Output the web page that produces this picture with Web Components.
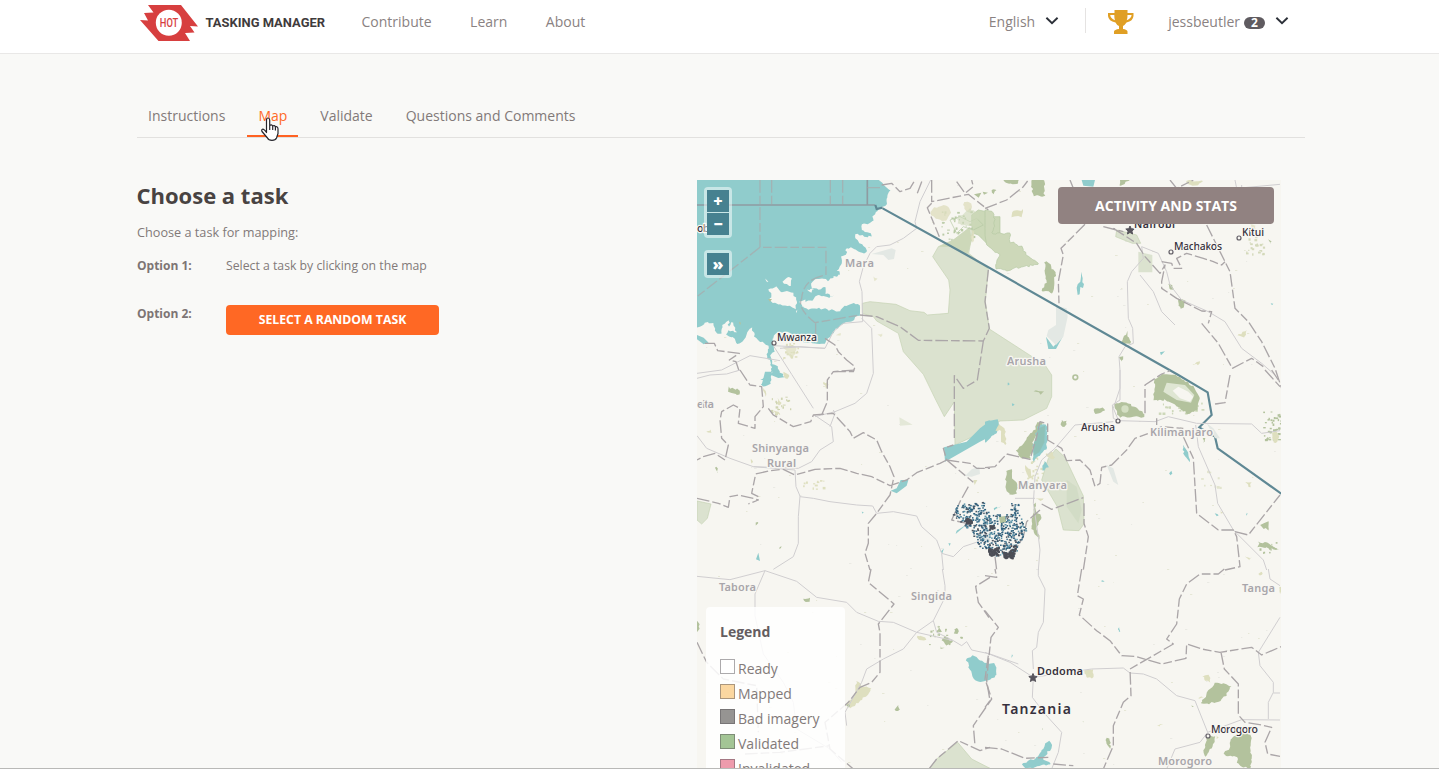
<!DOCTYPE html>
<html lang="en">
<head>
<meta charset="utf-8">
<title>Tasking Manager</title>
<style>
html,body{margin:0;height:100%;overflow:hidden;background:#f9f9f7;font-family:"Open Sans","Noto Sans",sans-serif;color:#827a79}
</style>
</head>
<body>
<tm-app></tm-app>
<script>
const define = (name, html, after) => customElements.define(name, class extends HTMLElement {
  constructor() {
    super();
    const t = document.createElement('template');
    t.innerHTML = html;
    this.attachShadow({ mode: 'open' }).appendChild(t.content.cloneNode(true));
  }
  connectedCallback() { if (after) after(this, this.shadowRoot); }
});

define('tm-chevron', `<style>:host{display:block;width:14px;height:9px}svg{display:block}</style>
<svg width="14" height="9" viewBox="0 0 14 9"><path d="M1.400 1.800 7 7.200l5.600-5.400" fill="none" stroke="#2c3038" stroke-width="1.900"/></svg>`);

define('tm-logo', `<style>:host{display:flex;align-items:center;gap:7.500px;width:221.500px;color:#3f3b3c}
b{font:700 12.950px/18px Roboto,sans-serif;white-space:nowrap;margin-top:1px}
svg{display:block;margin-top:2px}text{font:500 12px Roboto,sans-serif;fill:#d73f3f}</style>
<svg width="58" height="36" viewBox="0 0 58 36"><path d="M8 0H41L58 21.500 50 21 54.500 27.500 45 28 50 36H18.500L0 15 8 15.500 4 8 13.500 7.500Z" fill="#d73f3f"/><circle cx="28.800" cy="17.800" r="13" fill="#fff"/><text x="19.800" y="22.200" textLength="18.500" lengthAdjust="spacingAndGlyphs">HOT</text></svg>
<b>TASKING MANAGER</b>`);

define('tm-header', `<style>
:host{display:block;height:53px;border-bottom:1px solid #e9e8e7;background:#fff;font-size:14px}
.in{display:flex;align-items:center;height:44px;padding-left:140px;padding-right:150px;line-height:20px;white-space:nowrap}
nav{display:flex;gap:38.500px;color:#8a8282}
.right{display:flex;align-items:center;margin-left:auto;color:#8a8282}
.sep{width:1px;height:25px;background:#e5e3e2;margin:-3px 21px 0 26px}
.badge{font:700 12px/12px "Open Sans",sans-serif;color:#fff;background:#5f5b60;border-radius:7px;width:21px;height:12px;text-align:center;margin:2px 10px 0 4px}
tm-chevron{margin-top:-3px}
.trophy{display:block;margin-right:33px}
</style>
<div class="in"><tm-logo></tm-logo><nav><span>Contribute</span><span>Learn</span><span>About</span></nav>
<div class="right"><span style="margin-right:10px">English</span><tm-chevron></tm-chevron><i class="sep"></i>
<svg class="trophy" width="28" height="24" viewBox="0 0 28 24"><path d="M7.500 0H20.500V3H26.500V6Q26 11 19.500 12.500 17.500 15.500 16 16V19Q20 19.500 20.500 21.500V24H7V21.500Q7.500 19.500 12 19V16Q10 15.500 8.500 12.500 1.500 11 1 6V3H7.500Z" fill="#e09f24"/><path d="M3.200 5H7.300Q7.200 8 8 10.200 3.500 8.600 3.200 5ZM24.600 5H20.500Q20.600 8 19.700 10.200 24.200 8.600 24.600 5Z" fill="#fff"/></svg>
<span>jessbeutler</span><span class="badge">2</span><tm-chevron></tm-chevron></div></div>`);

define('tm-tab', `<style>:host{display:block;padding:0 11px;height:32px;line-height:22px;color:#827a79}
:host([active]){color:#ff6a28;border-bottom:2px solid #ff6222;height:30px}</style><slot></slot>`);

define('tm-tabs', `<style>:host{display:flex;gap:11px;margin:51px 134px 0 137px;height:32px;border-bottom:1px solid #e2e1df;font-size:14px;white-space:nowrap}</style><slot></slot>`);

define('tm-button', `<style>:host{display:block;background:#ff6824;color:#fff;border-radius:4px;text-align:center;font-weight:700}</style><slot></slot>`);

define('tm-option', `<style>:host{display:grid;grid-template-columns:89px 1fr;font-size:12.250px;line-height:18px}b{color:#7d7574;font-size:12px}</style><b><slot name="label"></slot></b><div><slot></slot></div>`);

define('tm-picker', `<style>
:host{display:block;width:560px}
h1{font-size:22px;line-height:30px;margin:0 0 0 -.5px;color:#484342;font-weight:700}
p{font-size:12.700px;line-height:18px;margin:13px 0 0}
tm-option{margin-top:16px;height:32px}
tm-button{width:213px;height:30px;line-height:29px;font-size:12.250px}
</style>
<h1>Choose a task</h1><p>Choose a task for mapping:</p>
<tm-option><span slot="label">Option 1:</span>Select a task by clicking on the map</tm-option>
<tm-option><span slot="label">Option 2:</span><tm-button>SELECT A RANDOM TASK</tm-button></tm-option>`);

define('tm-legend-item', `<style>:host{display:flex;gap:3px;height:25px;line-height:25px;font-size:14px}
i{box-sizing:border-box;width:15px;height:15px;margin-top:3px;border:1px solid rgba(90,85,90,.5);background:var(--swatch)}</style><i></i><slot></slot>`);

define('tm-legend', `<style>:host{display:block;box-sizing:border-box;width:139px;height:200px;background:rgba(255,255,255,.85);border-radius:4px;padding:14px 14px}
h2{font-size:14px;line-height:22px;margin:0 0 13px;color:#645d60}</style>
<h2>Legend</h2>
<tm-legend-item style="--swatch:#fff">Ready</tm-legend-item>
<tm-legend-item style="--swatch:#fbd7a0">Mapped</tm-legend-item>
<tm-legend-item style="--swatch:#969492">Bad imagery</tm-legend-item>
<tm-legend-item style="--swatch:#a3c595">Validated</tm-legend-item>
<tm-legend-item style="--swatch:#ee9bac">Invalidated</tm-legend-item>`);

define('tm-map-button', `<style>:host{display:block;width:22px;background:#468190;color:#fff;font:800 16px/22px "Open Sans",sans-serif;text-align:center;height:22px}</style><slot></slot>`);

define('tm-map', `<style>
:host{display:block;position:relative;width:584px;height:589px;overflow:hidden;background:#f7f6f1}
svg{display:block}
.ctl{position:absolute;left:7px;background:rgba(255,255,255,.5);border-radius:4px;padding:3px;display:flex;flex-direction:column;gap:1px}
tm-button{position:absolute;left:361px;top:7px;width:216px;height:37px;line-height:38px;font-size:14px;background:#918281}
tm-legend{position:absolute;left:9px;top:427px}
.w{fill:#90cccc}.l{fill:#f7f6f1}.p{fill:#dbe2cf;stroke:#c4d2b2;stroke-width:2}.g{fill:#b3c29d}.g2{fill:#cdd8b9}.y{fill:#dedfbf}.s{fill:#e3e8e4}
.r{fill:none;stroke:#d0ced0;stroke-width:3}.b{fill:none;stroke:#aba6a8;stroke-width:4;stroke-dasharray:38 9 26 9;stroke-linejoin:round}
.n{fill:none;stroke:#5f8894;stroke-width:6.500}
text{font-family:"Noto Sans","Open Sans",sans-serif;paint-order:stroke;stroke:#f7f6f1;stroke-width:2.500px;stroke-linejoin:round}
.reg{font-weight:600;font-size:11px;fill:#a8a5aa}.city{font-weight:500;font-size:10.500px;fill:#36313d}
</style>
<svg width="584" height="589" viewBox="697 180 584 589">
<g id="noise"></g>
<!-- north-west: Lake Victoria and Serengeti -->
<g transform="translate(690 175) scale(.33333)">
<path class="w rough" d="M21 15H570L578 28 600 45 590 65 590 90 570 100 548 125 548 140 518 150 515 165 540 175 547 185 515 182 490 175 500 195 520 210 533 230 520 235 490 220 465 218 470 235 452 245 455 270 440 285 455 300 430 305 415 320 400 310 380 310 365 325 365 340 385 345 405 335 405 355 430 365 410 368 385 360 370 375 345 378 335 390 355 405 385 400 420 405 445 412 460 395 490 382 508 392 508 420 490 435 460 445 435 465 420 485 405 505 385 510 360 500 345 505 330 495 300 475 270 470 250 480 248 500 252 530 240 540 245 565 265 575 270 595 245 590 240 625 228 635 215 630 230 605 245 585 240 560 230 545 235 510 215 500 195 490 185 455 175 470 155 500 145 512 135 490 110 480 115 465 140 470 125 440 115 455 120 430 100 445 95 480 80 475 70 445 50 440 35 455 21 460Z"/>
<path class="w" d="M21 480l20 8 15 15-15 5-20-15ZM238 600l20-18 25 25-18 2-20-8-24 14-10 0Z"/>
<path class="l rough" d="M280 320L290 308 305 310 303 330 285 330ZM235 345L260 335 270 350 300 350 312 360 322 375 318 400 295 392 270 390 235 375 248 360ZM318 405L328 402 320 412ZM330 382L345 375 355 388 340 395ZM350 345L375 340 360 352ZM225 310l12 10-8 1Z"/>
<path class="g" d="M234 372l12 0-6 8ZM147 440l6 3-3 8Z"/>
<path class="s" d="M545 237L605 220 617 225 612 252 595 255 580 240Z"/>
<path class="p" d="M517 385L540 380 618 388 660 407 702 412 712 420 775 415 780 345 776 315 745 270 728 245 745 215 790 195 838 158 848 168 836 235 895 282 886 380 898 462 1065 570 1085 600 1085 665 1070 700 1000 735 930 738 880 770 795 810 793 680 763 725 735 670 700 598 640 530 625 475 560 438 550 425 517 415Z"/>
<path class="g2" d="M745 215L790 195 838 158 846 195 832 238 790 215Z"/>
<g fill="none" stroke="#b5c8a3" stroke-width="2"><path fill="#cbd8b7" d="M845 120l20-15 25 5 20 15 20 0 0 50-20 15-15 20-30-30-15-5-5-25Z"/><path d="M780 135l30-10 30 15 20-10 20 20-30 15-30-10-20 20Z"/></g>
<path class="y rough" d="M728 98L760 92 780 100 782 120 760 140 735 132 720 115ZM820 80l25 3-3 30-15-5ZM844 165h8v38h-8Z" opacity=".8"/>
<path class="g" d="M852 58l22-5-8 15ZM878 50l16 3-12 6Z"/>
<path class="y rough" d="M280 515L300 510 320 515 315 540 300 550 290 535ZM565 477l15 0-8 12ZM440 480l16-5-8 10ZM548 305l16 4-8 8Z" opacity=".7"/>
<path fill="none" stroke="#8e9ba1" stroke-width="5" d="M21 90H556M532 15V90"/>
<path class="b" opacity=".65" d="M210 15V217H408V300Q340 310 335 370 320 400 375 443L510 420M210 217L21 365M245 15V88M421 15V88M458 15V88M532 38H575M377 445V480"/>
<path class="n" stroke-width="5" d="M556 90l4 12 18-4"/>
<path class="r" d="M722 15L690 80 675 140 680 160 640 190 600 210 560 215 540 235 520 275 508 320 516 350 518 440 460 445 430 470 405 520 250 512M515 430L545 460 550 595 530 655 495 685 435 710 375 725M252 515L305 598 370 700M21 595L95 585 180 542 270 557M405 520L330 515 270 520"/>
<path class="b" d="M575 30l30-5 25 25 30-10 15-25M682 55l15-40M725 15V80L835 58 895 105M725 85L712 98 748 185M510 420L560 425 630 455 685 496 880 498 898 460 885 380 895 285M800 20l25 35 25-20-5-20M880 498L862 615 820 640 793 602V790"/>
<path class="b" d="M45 505l28 0 10 22 65 8-30 20 20 5 10 30M405 490l30 20 10 20 25 25 25 20-5 15-30 0-30 0"/>
<path class="g2 rough" d="M800 130L840 100 870 120 850 155 810 150Z" opacity=".6"/>
</g>
<!-- north-east: Nairobi -->
<g transform="translate(985 175) scale(.33333)">
<path class="g2 rough" stroke="#b5c8a3" stroke-width="2" d="M0 105L25 110 30 140 20 175 75 175 75 200 110 215 125 240 160 265 135 272 110 275 65 287 30 280 45 240 5 210 0 180Z"/>
<path class="g rough" d="M55 15h50l-15 14-25-4ZM140 15h38l0 48-35-2ZM405 15h30l-30 20ZM178 260L193 262 198 280 213 290 208 315 205 355 168 345 185 320ZM550 325l12 3 3 15-15-5ZM582 372l20 5-10 25-12-5ZM425 470l12 35-28 0ZM398 545l16 0-4 15ZM852 195l8 3-3 10ZM20 45l12 0-6 12Z"/>
<path class="y rough" d="M605 17h50l-25 18-20-5ZM85 105l30 0-5 20-30 0ZM785 465l-5 22-25-5ZM620 568l25-10-5 12Z"/>
<path class="p" stroke="none" style="stroke:none" d="M460 230l42 10v52h-42Z"/><path class="p" d="M395 165l60 15 12 25-25 0-50-20Z"/>
<path class="w" d="M290 15h40l-5 20-30-3ZM288 290l5 20-1 12 5 5-3 12-8-3-2 22-6 2-3-22 3-10 8-8 2-15ZM183 485L205 515 233 485 213 522 190 522ZM525 532l15-3-12 12ZM857 385l8 1-4 5Z"/>
<path class="s" d="M213 393L245 400 248 425 235 485 213 510 185 483 190 465 213 450Z"/>
<path class="r" d="M470 215L475 250 440 290 427 320 430 430 443 460 445 505 420 515 402 545 405 585 405 640 385 700 400 735M470 215L520 235 545 290 555 330 590 375 670 410 720 440 770 520 830 565 870 600M465 300L505 350 530 410 570 450M750 15L755 40 885 28M770 60V30"/>
<path class="b" d="M0 100L65 75 115 35 130 15M255 15l10 25M300 148L228 220 235 240 220 320 222 385M385 160L455 205 480 245 525 295 540 270 530 320 530 340 575 370 650 408 680 410 670 445M665 150L705 230 735 290 750 400 790 440 830 500 870 580 890 640M530 260l30 5 5 15 25 0-15-30 30-15 50 15 30 10 25 10 10-10M650 445L700 505 742 580 800 550 835 575M555 15l20 25 50-25M355 155l60 15"/>
<path class="n" d="M-307 100L-60 237 580 600 668 652 680 720 643 757 690 785 698 820 890 957"/>
<path class="y rough" d="M795 150l15 0 0 20Z" opacity=".7"/>
</g>
<!-- west: Shinyanga -->
<g transform="translate(690 370) scale(.33333)">
<path class="w" d="M215 45l10-40 20 0-15 35ZM250 0l30 12-2 6-30-12ZM762 232L790 225 830 215 870 175 900 152 923 148 928 165 920 190 870 215 765 275ZM632 330L655 330 650 347 620 370 602 362 620 355ZM205 548l5 25-12-5ZM832 462l-35 30 3-10ZM775 520l7 0-3 8ZM752 545l10-10-5 15ZM515 425l6 1-3 5Z"/>
<path class="p" d="M21 393L63 402 52 445 35 462 21 450Z"/>
<path class="g rough" d="M115 52L150 60 152 72 135 75 115 65ZM75 292l10 0-3 18ZM198 458l8 0-6 8ZM268 530l10 2-10 5Z"/>
<path class="y rough" d="M280 5l18 10-5 10-12-5ZM398 37l17 3-8 15ZM50 185l15-5 0 12ZM265 85l10 20-10 5ZM252 122l22 10-18 2ZM220 55l12 15-8 12ZM180 270l8 0 0 15Z"/>
<path class="s" d="M825 318L845 298 868 290 870 312 845 320Z"/><path fill="#e4e8d8" d="M628 142l40 22-38 3Z"/>
<path class="y" d="M850 330l12 0-8 15Z"/>
<path class="r" d="M373 135L425 170 430 215 390 240 365 275 325 295 190 290 120 265 50 235 21 197M430 120L435 130 420 170M190 290L315 300 318 350 330 378 325 440 325 520 310 560 250 598M330 380L370 385 420 395 500 405 548 408 560 430 610 425 680 438 695 470 740 510 755 550 760 600M755 550L790 560 820 530 880 510M21 25L60 15 110 12 150 0"/>
<path class="b" d="M150 0L180 45 215 50 220 110 195 140 195 175 145 160 150 115 130 105 95 125 90 150 95 205 115 225 105 270 75 250 40 260 21 270M21 385L85 400 115 412 120 380 145 375 190 385 205 390 175 402M205 380L185 370 197 312 240 302 280 298 315 315 375 298 450 295 500 310 545 320 600 347 650 330 680 308 750 280 770 270 760 235 790 225M235 115L250 135 310 170 362 155 370 135 430 130 480 185 490 205 520 188 560 210 575 245 600 290 612 320 600 375 560 430 535 460 535 520 525 550 540 600M395 135L412 95 412 30 430 5 495 0M770 270L850 337M770 270L840 280 860 295 900 295M835 350L810 395 785 450 830 460"/>
</g>
<!-- east: Arusha and Kilimanjaro -->
<g transform="translate(985 370) scale(.33333)">
<path class="g rough" d="M510 30L530 12 575 15 625 50 642 80 640 120 605 130 580 110 540 90 505 92ZM390 105L415 95 450 110 478 130 475 142 400 140ZM325 120l30-8 5 12-25 8ZM230 152l15 0-5 20-12-8ZM95 240L120 215 135 190 150 180 155 155 175 155 145 215 135 268 110 265ZM63 300L80 295 82 325 95 340 95 370 75 375 62 350ZM150 400l0 20 20 20-10 20-5 20 15 35-25-25-5-35ZM830 460l20-5 2 25-25-10ZM820 515l30 5 35 20-35-5-30-5ZM655 205l8 0-5 15ZM148 63l28 0-10 10Z"/>
<path d="M535 65L545 38 600 45 628 75 618 98 575 90Z" fill="#dfe6d3"/><path class="l" d="M563 62L580 50 610 65 625 80 615 95 585 85Z"/><circle cx="420" cy="117" r="11" fill="#d4dfc3"/><circle cx="271" cy="22" r="7" fill="none" stroke="#b3c29d" stroke-width="5"/>
<path class="p" d="M213 237L240 262 295 378 297 462 282 482 235 480 218 412 170 330 190 265Z"/><path fill="#cfdac2" opacity=".7" d="M245 330l30 20 15 70-10 40-35-50Z"/>
<path class="w rough" d="M160 165L185 165 188 200 182 240 155 262 145 280 142 235ZM170 290l10-18 10 20-18 15ZM593 225L605 245 615 275 598 260ZM552 308l8-4 5 8-10 5ZM690 432l12 2-8 6ZM783 430l5 5-5 5ZM0 155L15 150 35 170 30 190 0 220ZM47 410l-22 15 5-12ZM82 98l10 4-10 5ZM68 40l6 0-3 8Z"/>
<path fill="#8fbcae" d="M160 175l20-8-2 50-15 30-18 10 2-40Z" opacity=".7"/>
<path class="y rough" d="M40 160l20 15 5 50-15-5-5-40-12 5ZM120 285l20 20 0 20-10 0ZM180 250l20-5 10 20-20 0ZM150 385l25-3-5 12ZM783 338h16l-3 15ZM860 190l20-5 0 25-15 10ZM705 420l12 10-8 5ZM780 562l20 0-8 8Z"/>
<path class="s" d="M365 285l20 10 15 50-15-10ZM665 160l20 15 20 30-15 0Z"/>
<path class="r" d="M405 0V90L382 105 385 145 400 152 510 155 550 140 635 160 800 162 830 190 885 182M385 155L270 165 210 235 170 270 150 320 145 400 160 500 165 540 160 600M632 165L640 230 690 345 698 400 745 480 835 570 845 600M150 385L90 385"/>
<path class="b" d="M0 293L30 290 65 252 135 268 155 200 165 155 188 162 188 210 230 235 245 272 285 270 315 300 330 350 345 340 350 292 380 285 425 240 450 205 490 190 530 170 595 175M515 145v20M480 130V45L530 12 555 2M595 200L625 265 635 430 700 480 745 480 755 500 765 590 720 600M750 485L790 495 885 375M735 15L720 98 690 102M840 0L885 50M170 402L200 418 295 383M297 400V460L310 500 295 600M165 420L125 455 115 500 85 550M860 0l20 30M30 560L35 600"/>
</g>
<g id="project"></g>
<!-- south-west: Tabora and Singida -->
<g transform="translate(690 569) scale(.33333)">
<path class="w rough" d="M828 270L850 260 885 280 915 285 920 320 900 335 870 342 845 320Z"/>
<path class="y rough" d="M500 335L515 350 545 357 530 380 480 420 468 408 495 380ZM680 200L705 203 708 215 690 215Z"/>
<path class="g rough" d="M340 88h20l0 10-15-3ZM745 170l10 20-12-5ZM795 180l12 0-5 15-8 0ZM755 212L770 203 788 220 770 232ZM623 410l10 12-20 2ZM750 235l12 0-8 8ZM21 155l5 5 0 25-5 5ZM470 405l12 0-6 12Z"/>
<path class="p" d="M717 600L740 570 803 520 845 570 900 598Z"/>
<path class="r" d="M21 22L120 32 225 5 320 37 380 85 470 100 500 130 565 157 610 160 680 190 790 215 815 230 830 218 845 243 900 255 985 285M225 5L195 75 195 140 220 255 280 340 310 400 320 480 420 540 455 580M757 0L765 50 765 85 730 155 680 190 640 240 580 270 530 300 515 340 465 430 470 470M730 155L740 190 790 215"/>
<path class="b" d="M543 0L535 40 612 105 565 165 570 190 570 310 545 340 510 355 475 400 405 460 420 540 490 600M21 220L50 280 100 330 200 350 205 490M165 555L270 550 420 530M900 25L857 52 865 100 900 150M895 260L885 330 905 390 850 470 855 530M717 600L740 570 805 515 870 545 900 535"/>
</g>
<!-- south-east: Dodoma and Morogoro -->
<g transform="translate(985 569) scale(.33333)">
<path class="w rough" d="M112 588L130 575 150 572 190 515 203 530 175 570 200 585 165 590 125 600ZM80 257l5 5-5 8ZM400 172l4 8-3 12ZM348 33l10 2-4 4Z"/>
<path class="g rough" d="M645 405L668 370 690 340 738 350 722 380 700 400ZM735 510L760 492 798 495 798 600 760 590 755 565 720 558 715 550 735 540ZM665 505L688 500 690 515 665 565 655 550ZM365 505l10 5 0 30-12-10ZM295 455l5 5-5 3ZM170 477l5 5ZM375 45l15-6-10 6ZM618 410l8 3Z"/>
<path class="y rough" d="M297 305L325 303 325 325 305 328ZM655 320l20 0 0 20-20-8ZM640 385l18-3-15 10ZM515 467l18 0-8 5ZM882 55l6 0 0 20ZM820 15l10-8 5 12ZM692 495l8 10-6 10Z"/>
<path class="r" d="M160 0V20L180 60 175 160 160 190 155 235 142 245 145 300M0 250L75 280 145 325 142 385 180 435 230 490 220 550 200 600M145 325L250 310 320 300 415 297 435 312 475 315 515 330 575 380 630 395 668 490 645 520 570 540 545 600M668 490L770 452 885 453M885 145L820 250 825 290 865 340 865 370 850 400 850 450M865 372H885M850 0L855 30 885 50"/>
<path class="b" d="M290 0L277 80 295 90 283 138 335 185 375 215 410 260 450 262 530 285 603 268 605 225 650 240 705 250 800 235 830 258 888 233M718 0L700 15 645 15 605 45 583 90 575 165 545 210 565 225 435 300 438 380 415 400 385 470 385 530 355 600M708 250L718 300 760 345 760 438 780 460 830 468 860 475 840 520 848 555 885 562M0 535L50 540 120 568 190 565M205 585l60 5M0 125L40 175 18 205 10 280 5 335 15 395 0 415M0 20l35 5-5-25"/>
</g>
<path d="M1130 226l1.200 2.700 3 .3-2.300 2 .7 3-2.600-1.600-2.600 1.600.7-3-2.300-2 3-.3ZM1033 673.500l1.200 2.700 3 .3-2.300 2 .7 3-2.600-1.600-2.600 1.600.7-3-2.300-2 3-.3Z" fill="#57545c" stroke="#57545c"/>
<g fill="#f7f6f1" stroke="#625e66" stroke-width="1.200"><circle cx="774" cy="343" r="2"/><circle cx="1171" cy="252" r="2"/><circle cx="1239" cy="238" r="2"/><circle cx="1118" cy="421" r="2"/><circle cx="1208" cy="736" r="2"/></g>
<g class="reg"><text x="845" y="267" textLength="29">Mara</text><text x="1007" y="365" textLength="39">Arusha</text><text x="697" y="408" textLength="17">eita</text><text x="752" y="452" textLength="57">Shinyanga</text><text x="767" y="467" textLength="29">Rural</text><text x="1150" y="436" textLength="63">Kilimanjaro</text><text x="1018" y="489" textLength="49">Manyara</text><text x="719" y="591" textLength="37">Tabora</text><text x="911" y="600" textLength="41">Singida</text><text x="1242" y="592" textLength="33">Tanga</text><text x="1158" y="765" textLength="54">Morogoro</text></g>
<g class="city"><text x="697" y="232" textLength="18">oba</text><text x="777" y="340.500" textLength="40">Mwanza</text><text x="1134" y="228" textLength="41" font-weight="600">Nairobi</text><text x="1174" y="249.500" textLength="48">Machakos</text><text x="1242" y="235.500" textLength="22">Kitui</text><text x="1081" y="431" textLength="34">Arusha</text><text x="1037" y="674.500" textLength="46" style="font-weight:600;font-size:11px">Dodoma</text><text x="1211" y="733" textLength="47">Morogoro</text><text x="1002" y="714" textLength="69" style="font-weight:600;font-size:14px">Tanzania</text></g>
</svg>
<div class="ctl" style="top:7px"><tm-map-button>+</tm-map-button><tm-map-button>−</tm-map-button></div>
<div class="ctl" style="top:70px"><tm-map-button>»</tm-map-button></div>
<tm-button>ACTIVITY AND STATS</tm-button>
<tm-legend></tm-legend>`, (host, root) => {
  let seed = 7;
  const rnd = () => (seed = (seed * 16807) % 2147483647) / 2147483647;
  // break long straight edges into an irregular natural outline
  root.querySelectorAll('.rough').forEach(p => {
    const len = p.getTotalLength();
    if (!len) return;
    const subs = p.getAttribute('d').split(/(?=M)/);
    const probe = document.createElementNS('http://www.w3.org/2000/svg', 'path');
    p.setAttribute('d', subs.map(s => {
      probe.setAttribute('d', s);
      const l = probe.getTotalLength(), n = Math.max(4, Math.round(l / 7));
      let d = '';
      for (let i = 0; i < n; i++) {
        const q = probe.getPointAtLength(l * i / n);
        const edge = q.x < 22 || q.y < 16 ? 0 : 6;
        d += (i ? 'L' : 'M') + (q.x + (rnd() - .5) * edge).toFixed(1) + ' ' + (q.y + (rnd() - .5) * edge).toFixed(1);
      }
      return d + 'Z';
    }).join(''));
  });
  // tiny vegetation patches
  let out = '';
  const clusters = [[1272,425,9,14,40,'#b3c29d'],[780,405,10,9,20,'#cfd4b2'],[945,635,18,9,18,'#b3c29d'],[1255,245,10,9,22,'#d4d9bb'],[1180,408,22,6,25,'#cdd8b9'],[1035,470,9,14,30,'#dedfbf'],[965,225,24,14,60,'#b9caa6'],[790,350,8,9,20,'#dedfbf'],[1215,480,14,14,10,'#e2e4cd'],[815,485,14,5,12,'#dedfbf'],[1268,548,12,6,12,'#b3c29d']];
  clusters.forEach(([x, y, w, h, n, c]) => {
    for (let i = 0; i < n; i++) out += `<rect x="${(x + (rnd() - .5) * 2 * w).toFixed(1)}" y="${(y + (rnd() - .5) * 2 * h).toFixed(1)}" width="${(1 + rnd() * 2).toFixed(1)}" height="${(1 + rnd() * 1.5).toFixed(1)}" fill="${c}"/>`;
  });
  for (let i = 0; i < 220; i++) out += `<rect x="${(697 + rnd() * 584).toFixed(0)}" y="${(180 + rnd() * 589).toFixed(0)}" width="${(1 + rnd() * 1.6).toFixed(1)}" height="1" fill="${rnd() > .5 ? '#e6e7d6' : '#eaeae4'}"/>`;
  root.getElementById('noise').innerHTML = out;
  // task cells of the project
  const poly = [[957,504],[972,501],[983,501],[986,510],[994,513],[1004,513],[1010,510],[1009,503],[1018,503],[1019,514],[1026,529],[1021,541],[1014,557],[993,555],[985,550],[977,544],[972,533],[962,523],[952,515]];
  const inside = (x, y) => { let c = false; for (let i = 0, j = poly.length - 1; i < poly.length; j = i++) { const [a, b] = poly[i], [e, f] = poly[j]; if ((b > y) !== (f > y) && x < (e - a) * (y - b) / (f - b) + a) c = !c; } return c; };
  out = '<path d="M978 540l12-8 0 10Z" fill="#e0e4e2"/>';
  const cols = ['#2e5f7c', '#2e5f7c', '#3c6f8b', '#5b93a8', '#4b5663'];
  for (let i = 0; i < 1000; i++) {
    const x = 950 + rnd() * 78, y = 499 + rnd() * 60, big = rnd();
    if (inside(x, y)) out += `<rect x="${x.toFixed(1)}" y="${y.toFixed(1)}" width="${big > .6 ? 2 : 1.5}" height="1.500" fill="${cols[Math.floor(rnd() * 5)]}"/>`;
  }
  [[968,520.500,3,2.500,30],[993,551,5,4,60],[1008,554.500,5,3,50],[1012,549,3,4,16],[991,526,3,2,12]].forEach(([x, y, w, h, n]) => {
    for (let i = 0; i < n; i++) out += `<rect x="${(x + (rnd() - .5) * 2 * w).toFixed(1)}" y="${(y + (rnd() - .5) * 2 * h).toFixed(1)}" width="2" height="2" fill="#4d4f57"/>`;
  });
  out += '<path d="M999 517l6-1 1 6-6 1Z" fill="#b3c29d"/>';
  root.getElementById('project').innerHTML = out;
});

define('tm-pointer', `<style>:host{display:block;position:absolute;left:260px;top:117px}svg{display:block}</style>
<svg width="20" height="25" viewBox="0 0 20 25"><path d="M6.500 15.500V3Q6.500 1 8 1T9.700 3V8.500Q11.500 7 12.700 9 14.500 8 15.400 9.800 18 9.300 18 12V16.500L16.500 21Q15.500 23.300 12 23.300 8.500 23.300 7.500 21L2 14.500Q1.200 12.800 2.500 12.200T6.500 15.500ZM9.700 8.500V13M12.700 9V13M15.400 10V13.500" fill="#fff" stroke="#25252b" stroke-width="1.200" stroke-linejoin="round"/></svg>`);

define('tm-app', `<style>:host{display:flex;flex-direction:column;height:769px;overflow:hidden;position:relative}
main{display:flex;padding-left:137px;margin-top:42px}tm-picker{flex:none}
.edge{position:absolute;left:0;right:0;bottom:0;height:1px;background:#b9b9b7}</style>
<tm-header></tm-header>
<tm-tabs><tm-tab>Instructions</tm-tab><tm-tab active>Map</tm-tab><tm-tab>Validate</tm-tab><tm-tab>Questions and Comments</tm-tab></tm-tabs>
<main><tm-picker></tm-picker><tm-map></tm-map></main><tm-pointer></tm-pointer><div class="edge"></div>`);
</script>
</body>
</html>
